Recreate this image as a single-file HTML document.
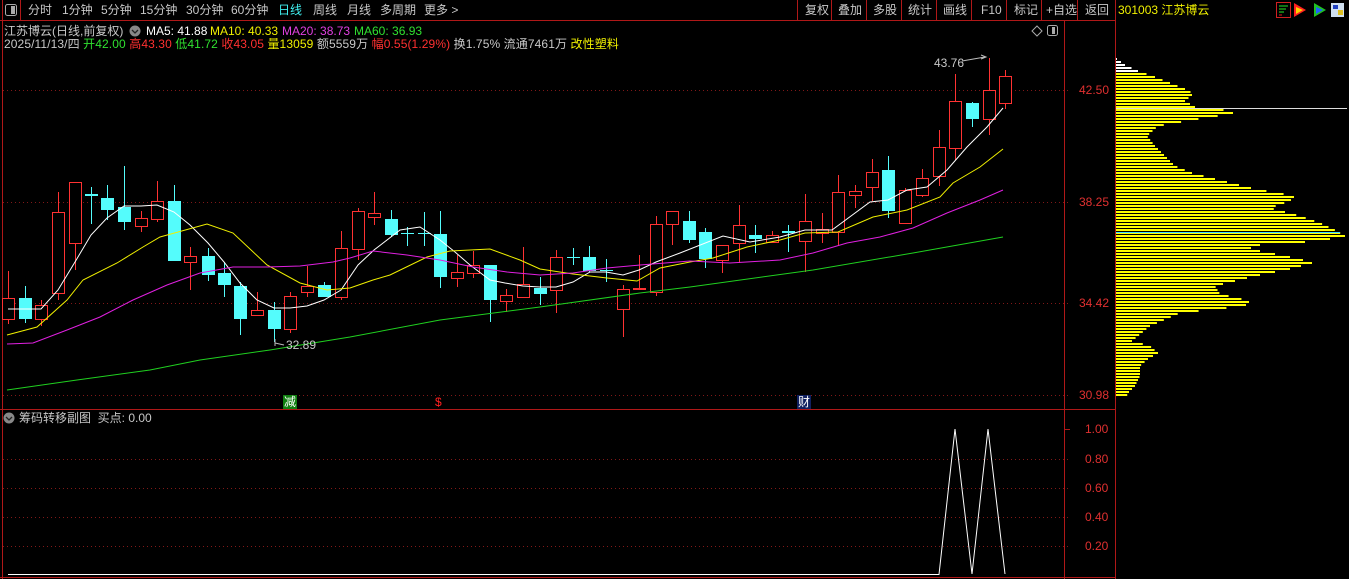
<!DOCTYPE html>
<html><head><meta charset="utf-8">
<style>
html,body{margin:0;padding:0;background:#000;width:1349px;height:579px;overflow:hidden}
body{position:relative;font-family:"Liberation Sans","Noto Sans CJK SC",sans-serif;font-size:12px;color:#c8c8c8}
.t{position:absolute;white-space:nowrap;line-height:14px}
svg{position:absolute;left:0;top:0}
</style></head><body>
<svg id="g" width="1349" height="579" xmlns="http://www.w3.org/2000/svg">
<g stroke="#b01818" stroke-width="1" fill="none">
<line x1="0" y1="20.5" x2="1115" y2="20.5"/>
<line x1="2.5" y1="0" x2="2.5" y2="579"/>
<line x1="1064.5" y1="20" x2="1064.5" y2="579"/>
<line x1="1115.5" y1="0" x2="1115.5" y2="579"/>
<line x1="0" y1="409.5" x2="1115" y2="409.5"/>
<line x1="0" y1="577.5" x2="1115" y2="577.5"/>
<line x1="797.5" y1="0" x2="797.5" y2="20"/><line x1="831.5" y1="0" x2="831.5" y2="20"/>
<line x1="866.5" y1="0" x2="866.5" y2="20"/><line x1="901.5" y1="0" x2="901.5" y2="20"/>
<line x1="936.5" y1="0" x2="936.5" y2="20"/><line x1="971.5" y1="0" x2="971.5" y2="20"/>
<line x1="1006.5" y1="0" x2="1006.5" y2="20"/><line x1="1041.5" y1="0" x2="1041.5" y2="20"/>
<line x1="1077.5" y1="0" x2="1077.5" y2="20"/>
<line x1="20.5" y1="0" x2="20.5" y2="20"/>
</g>
<g stroke="#801818" stroke-width="1" stroke-dasharray="1,3">
<line x1="3" y1="90.5" x2="1070" y2="90.5"/><line x1="3" y1="202.5" x2="1070" y2="202.5"/>
<line x1="3" y1="303.5" x2="1070" y2="303.5"/><line x1="3" y1="395.5" x2="1070" y2="395.5"/>
<line x1="3" y1="459.5" x2="1070" y2="459.5"/><line x1="3" y1="488.5" x2="1070" y2="488.5"/>
<line x1="3" y1="517.5" x2="1070" y2="517.5"/><line x1="3" y1="546.5" x2="1070" y2="546.5"/>
</g>
<g stroke="#b01818"><line x1="1064" y1="429.5" x2="1070" y2="429.5"/></g>
<rect x="5.5" y="4.5" width="11" height="11" rx="2" fill="none" stroke="#aaa"/><rect x="11" y="6" width="4" height="8" fill="#aaa"/>
<rect x="1276.5" y="2.5" width="14" height="15" fill="none" stroke="#d02020"/>
<g stroke="#20c020" stroke-width="1.2"><line x1="1279" y1="6" x2="1288" y2="6"/><line x1="1279" y1="9" x2="1286" y2="9"/><line x1="1279" y1="12" x2="1284" y2="12"/></g>
<line x1="1279" y1="15" x2="1282" y2="15" stroke="#e02020"/>
<polygon points="1294,3 1306,10 1294,17" fill="#ff2020"/><polygon points="1296,7 1303,10 1296,14" fill="#ffd000"/>
<polygon points="1314,3 1326,10 1314,17" fill="#20c020"/><polygon points="1316,7 1323,10 1316,14" fill="#2060ff"/>
<rect x="1331" y="3" width="13" height="14" fill="#d0e0f0"/><rect x="1333" y="5" width="5" height="4" fill="#2040c0"/><rect x="1338" y="10" width="5" height="5" fill="#e0c020"/>
<polygon points="1037,26 1042,31 1037,36 1032,31" fill="none" stroke="#aaa"/>
<rect x="1047.5" y="25.5" width="10" height="10" rx="2" fill="none" stroke="#aaa"/><rect x="1052" y="27" width="3" height="7" fill="#aaa"/>
<circle cx="135" cy="31" r="5.5" fill="#888"/><polyline points="132,30 135,33 138,30" fill="none" stroke="#222" stroke-width="1.3"/>
<circle cx="9" cy="418" r="5.5" fill="#888"/><polyline points="6,417 9,420 12,417" fill="none" stroke="#222" stroke-width="1.3"/>
<g id="dyn"></g>
</svg>

<div class="t" style="left:28px;top:3px">分时</div>
<div class="t" style="left:62px;top:3px">1分钟</div>
<div class="t" style="left:101px;top:3px">5分钟</div>
<div class="t" style="left:140px;top:3px">15分钟</div>
<div class="t" style="left:186px;top:3px">30分钟</div>
<div class="t" style="left:231px;top:3px">60分钟</div>
<div class="t" style="left:278px;top:3px;color:#40f0f0">日线</div>
<div class="t" style="left:313px;top:3px">周线</div>
<div class="t" style="left:347px;top:3px">月线</div>
<div class="t" style="left:380px;top:3px">多周期</div>
<div class="t" style="left:424px;top:3px">更多 &gt;</div>

<div class="t" style="left:805px;top:3px">复权</div>
<div class="t" style="left:838px;top:3px">叠加</div>
<div class="t" style="left:873px;top:3px">多股</div>
<div class="t" style="left:908px;top:3px">统计</div>
<div class="t" style="left:943px;top:3px">画线</div>
<div class="t" style="left:981px;top:3px">F10</div>
<div class="t" style="left:1014px;top:3px">标记</div>
<div class="t" style="left:1046px;top:3px">+自选</div>
<div class="t" style="left:1085px;top:3px">返回</div>
<div class="t" style="left:1118px;top:3px;color:#f0f000">301003 江苏博云</div>

<div class="t" style="left:4px;top:24px">江苏博云(日线,前复权)</div>
<div class="t" style="left:146px;top:24px;color:#fff">MA5: 41.88</div>
<div class="t" style="left:210px;top:24px;color:#f0f000">MA10: 40.33</div>
<div class="t" style="left:282px;top:24px;color:#e040e0">MA20: 38.73</div>
<div class="t" style="left:354px;top:24px;color:#30e030">MA60: 36.93</div>

<div class="t" style="left:4px;top:37px;letter-spacing:0.1px">2025/11/13/四 <span style="color:#30e030">开42.00</span> <span style="color:#ff3030">高43.30</span> <span style="color:#30e030">低41.72</span> <span style="color:#ff3030">收43.05</span> <span style="color:#f0f000">量13059</span> 额5559万 <span style="color:#ff3030">幅0.55(1.29%)</span> 换1.75% 流通7461万 <span style="color:#f0f000">改性塑料</span></div>

<div class="t" style="left:934px;top:56px;color:#c8c8c8">43.76</div>
<div class="t" style="left:286px;top:338px;color:#c8c8c8">32.89</div>
<div class="t" style="left:283px;top:395px;background:#108010;color:#fff;padding:0 1px">减</div>
<div class="t" style="left:435px;top:395px;color:#ff2020">$</div>
<div class="t" style="left:797px;top:395px;background:#102060;color:#fff;padding:0 1px">财</div>

<div class="t" style="left:1079px;top:83px;color:#e03030">42.50</div>
<div class="t" style="left:1079px;top:195px;color:#e03030">38.25</div>
<div class="t" style="left:1079px;top:296px;color:#e03030">34.42</div>
<div class="t" style="left:1079px;top:388px;color:#e03030">30.98</div>
<div class="t" style="left:1085px;top:422px;color:#e03030">1.00</div>
<div class="t" style="left:1085px;top:452px;color:#e03030">0.80</div>
<div class="t" style="left:1085px;top:481px;color:#e03030">0.60</div>
<div class="t" style="left:1085px;top:510px;color:#e03030">0.40</div>
<div class="t" style="left:1085px;top:539px;color:#e03030">0.20</div>

<div class="t" style="left:19px;top:411px">筹码转移副图 &nbsp;买点: 0.00</div>

<script>
var g=document.getElementById("dyn"),h="";
var C=[[8,'r',298,319,271,324],[25,'c',298,319,286,323],[41,'r',305,319,300,326],[58,'r',212,293,192,300],[75,'r',182,243,182,270],[91,'c',194,196,187,224],[107,'c',198,210,185,220],[124,'c',207,222,166,230],[141,'r',218,226,211,232],[157,'r',201,219,181,222],[174,'c',201,261,185,261],[190,'r',256,262,247,290],[208,'c',256,275,248,281],[224,'c',273,285,262,297],[240,'c',286,319,282,335],[257,'r',310,315,292,316],[274,'c',310,329,302,342],[290,'r',296,329,292,333],[307,'r',286,292,266,297],[324,'c',285,297,282,297],[341,'r',248,297,231,300],[358,'r',211,249,208,260],[374,'r',213,217,192,225],[391,'c',219,235,210,237],[407,'c',233,234,227,246],[424,'c',233,234,212,246],[440,'c',234,277,211,288],[457,'r',272,278,255,287],[473,'r',265,273,251,278],[490,'c',265,300,265,322],[506,'r',295,301,289,312],[523,'r',284,297,247,297],[540,'c',288,294,277,305],[556,'r',257,290,250,313],[573,'c',257,258,248,265],[589,'c',257,271,246,272],[606,'c',270,271,259,282],[623,'r',289,309,285,337],[639,'r',288,289,255,290],[656,'r',224,292,216,296],[672,'r',211,224,211,245],[689,'c',221,240,211,243],[705,'c',232,259,228,268],[722,'r',245,260,245,273],[739,'r',225,243,205,263],[755,'c',235,239,225,253],[772,'r',235,242,231,242],[788,'c',231,233,225,252],[805,'r',221,241,194,272],[822,'r',229,233,213,243],[838,'r',192,232,175,246],[855,'r',191,195,185,208],[872,'r',172,187,159,201],[888,'c',170,211,156,218],[905,'r',190,223,188,224],[922,'r',178,195,169,197],[939,'r',147,176,130,186],[955,'r',101,148,74,160],[972,'c',103,119,102,127],[989,'r',90,119,58,135],[1005,'r',76,103,70,109]];
C.forEach(function(c){var x=c[0],t=c[2],b=c[3];if(b-t<1)b=t+1;
if(c[1]=='c'){h+='<line x1="'+(x+.5)+'" y1="'+c[4]+'" x2="'+(x+.5)+'" y2="'+c[5]+'" stroke="#54fcfc"/>';h+='<rect x="'+(x-6)+'" y="'+t+'" width="13" height="'+(b-t)+'" fill="#54fcfc"/>';}
else{h+='<line x1="'+(x+.5)+'" y1="'+c[4]+'" x2="'+(x+.5)+'" y2="'+t+'" stroke="#ff3232" shape-rendering="crispEdges"/><line x1="'+(x+.5)+'" y1="'+b+'" x2="'+(x+.5)+'" y2="'+c[5]+'" stroke="#ff3232" shape-rendering="crispEdges"/>';h+='<rect x="'+(x-5.5)+'" y="'+(t+.5)+'" width="12" height="'+(b-t)+'" fill="#000" stroke="#ff3232" shape-rendering="crispEdges"/>';}});
function pl(p,col){h+='<polyline fill="none" stroke="'+col+'" stroke-width="1" points="'+p+'"/>';}
var L='';
pl("8,309 41,309 58,290 75,262 91,235 107,218 124,206 141,206 157,205 174,212 190,225 208,243 224,262 240,283 257,300 274,308 290,308 307,306 324,300 341,290 358,265 374,250 400,230 420,227 440,240 455,252 470,265 490,280 505,283 523,286 540,287 556,287 573,282 590,272 606,272 623,275 639,270 656,262 680,253 723,236 750,242 780,237 805,230 832,230 870,202 888,200 907,190 927,187 947,170 967,147 987,127 1003,108","#ffffff");
pl("7,335 37,327 67,300 83,280 117,263 143,247 160,237 207,224 233,233 267,265 300,283 327,290 350,288 373,280 390,275 427,257 450,251 490,249 520,260 540,269 573,274 607,278 637,281 660,268 690,262 713,258 747,247 780,240 805,233 838,232 873,217 907,210 940,197 953,183 980,167 1003,149","#f0f000");
pl("7,344 33,343 67,330 100,317 133,300 167,285 200,273 233,267 267,267 300,266 333,262 350,258 373,251 407,255 440,260 473,267 507,272 540,275 573,273 607,268 640,265 690,261 730,263 780,260 813,253 847,243 880,237 913,228 947,213 980,200 1003,190","#e020e0");
pl("7,390 77,380 150,370 200,360 270,350 350,337 440,320 540,307 640,293 690,287 813,270 913,253 1003,237","#20d020");
pl("8,574.5 939,574.5 955,429 972,574 988,429 1005,574","#ffffff");
h+='<polyline fill="none" stroke="#bbb" points="962,61 985,57"/><polyline fill="none" stroke="#bbb" points="981,55 986,57 981,59"/>';
h+='<polyline fill="none" stroke="#bbb" points="284,345 275,343"/><polyline fill="none" stroke="#bbb" points="275,339 275,346"/>';
var P=[[58,1117],[64,1125],[70,1138],[76,1155],[84,1175],[90,1190],[94,1192],[100,1185],[106,1195],[110,1233],[113,1233],[116,1210],[125,1158],[135,1147],[145,1155],[155,1165],[165,1175],[172,1192],[178,1215],[183,1235],[188,1255],[195,1295],[200,1290],[207,1270],[215,1300],[222,1320],[230,1337],[235,1345],[240,1320],[245,1245],[250,1260],[258,1300],[262,1312],[268,1290],[275,1255],[285,1215],[293,1220],[300,1250],[305,1245],[312,1180],[325,1150],[340,1132],[345,1150],[352,1158],[358,1148],[365,1140],[375,1140],[385,1135],[393,1127],[397,1128]];
function at(y){for(var i=0;i<P.length-1;i++){if(y>=P[i][0]&&y<=P[i+1][0]){var f=(y-P[i][0])/(P[i+1][0]-P[i][0]);return P[i][1]+f*(P[i+1][1]-P[i][1]);}}return 1117;}
for(var y=58;y<=396;y+=3){var e=at(y);h+='<rect x="1116" y="'+y+'" width="'+Math.max(1,e-1116)+'" height="2" fill="'+(y<73?'#ffffff':'#ffff00')+'"/>';}
h+='<line x1="1116" y1="108.5" x2="1347" y2="108.5" stroke="#ddd"/><line x1="1116" y1="232.5" x2="1340" y2="232.5" stroke="#40e0ff"/>';
g.innerHTML=h;
</script>
</body></html>
